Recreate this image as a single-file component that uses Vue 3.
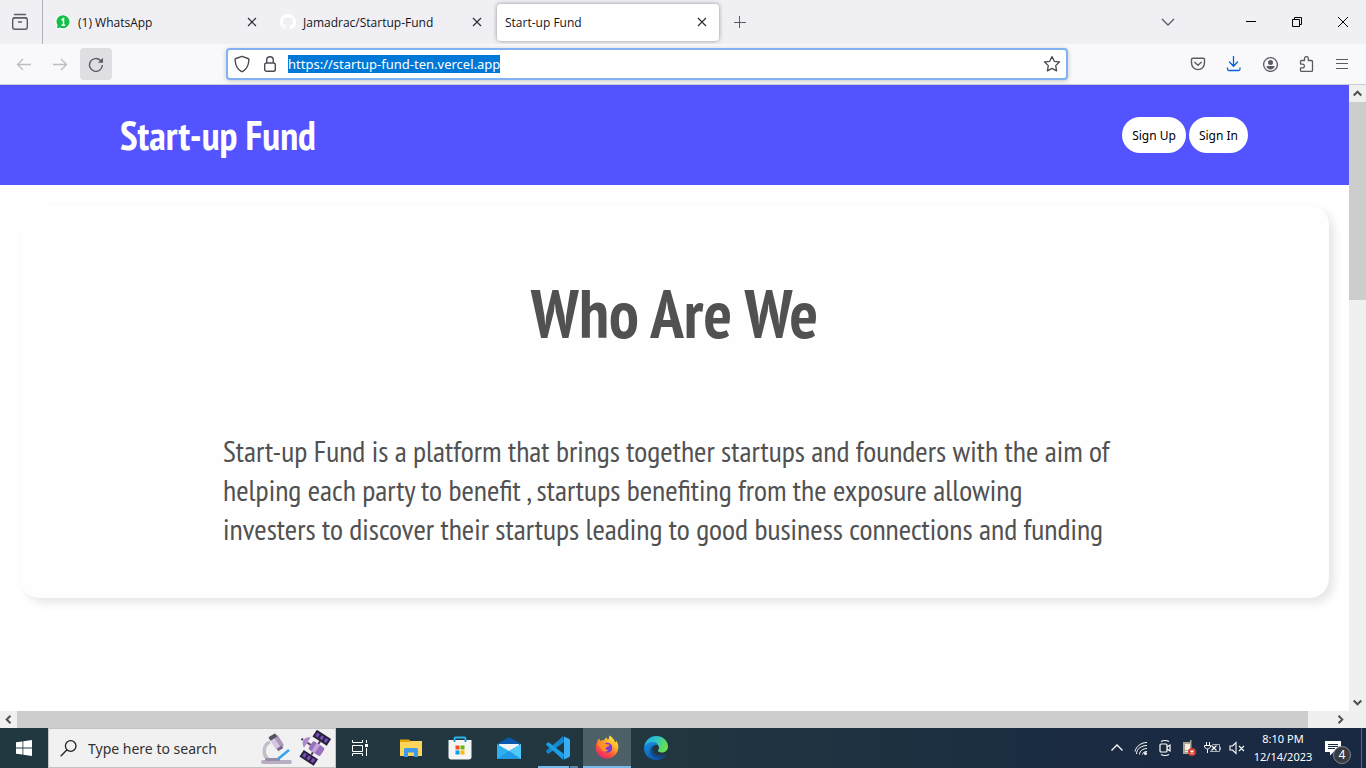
<script setup>
import { ref, onMounted } from 'vue'

const tabs = [
  { title: '(1) WhatsApp', icon: 'whatsapp', active: false },
  { title: 'Jamadrac/Startup-Fund', icon: 'github', active: false },
  { title: 'Start-up Fund', icon: '', active: true },
]
const address = ref('https://startup-fund-ten.vercel.app')
const addressBox = ref(null)

onMounted(() => {
  addressBox.value.focus()
  addressBox.value.select()
})
</script>

<template>
  <div class="screen">
    <header class="tabbar">
      <button class="recent" aria-label="Recent browsing">
        <svg width="18" height="18" viewBox="0 0 18 18" fill="none" stroke="#5b5b66" stroke-width="1.4" stroke-linecap="round">
          <path d="M3.500 1.500h11" /><rect x="1.700" y="4.700" width="14.600" height="11.600" rx="2.200" /><path d="M3 4.700h12M7.500 9h3" />
        </svg>
      </button>
      <nav class="tabs">
        <div v-for="tab in tabs" :key="tab.title" class="tab" :class="{ active: tab.active }">
          <svg v-if="tab.icon === 'whatsapp'" class="favicon" width="16" height="16" viewBox="0 0 16 16">
            <path d="M8 .5a7.500 7.500 0 1 1-3.700 14L.5 15.500l1-3.700A7.500 7.500 0 0 1 8 .5z" fill="#fff" />
            <path d="M8.200 1.300a6.500 6.500 0 1 1-3.300 12.200L1.800 14.300l.8-3A6.500 6.500 0 0 1 8.200 1.300z" fill="#12bf48" />
            <path d="M6.500 6l2-1.300v6.400M6.600 11.200h3.600" fill="none" stroke="#fff" stroke-width="1.500" />
          </svg>
          <svg v-if="tab.icon === 'github'" class="favicon" width="16" height="16" viewBox="0 0 16 16" fill="#fff">
            <path d="M8 0C3.580 0 0 3.580 0 8c0 3.540 2.290 6.530 5.470 7.590.4.070.55-.17.55-.38v-1.490c-2.010.37-2.530-.49-2.690-.94-.09-.23-.48-.94-.82-1.130-.28-.15-.68-.52-.01-.53.63-.01 1.080.58 1.230.82.72 1.210 1.870.87 2.330.66.07-.52.28-.87.51-1.070-1.780-.2-3.640-.89-3.640-3.950 0-.87.31-1.590.82-2.150-.08-.2-.36-1.020.08-2.120 0 0 .67-.21 2.200.82a7.600 7.600 0 0 1 4 0c1.530-1.040 2.200-.82 2.200-.82.44 1.100.16 1.920.08 2.120.51.56.82 1.270.82 2.150 0 3.070-1.870 3.750-3.650 3.950.29.25.54.73.54 1.480v2.200c0 .21.15.46.55.38A8 8 0 0 0 8 0z" />
          </svg>
          <span class="tab-title">{{ tab.title }}</span>
          <button class="close" :aria-label="'Close ' + tab.title">
            <svg width="10" height="10" viewBox="0 0 10 10" stroke="#2b2a33" stroke-width="1.100"><path d="M1 1l8 8M9 1l-8 8" /></svg>
          </button>
        </div>
      </nav>
      <button class="newtab" aria-label="New tab">
        <svg width="12" height="12" viewBox="0 0 12 12" stroke="#5b5b66"><path d="M5.500 0v12M0 6.500h12" /></svg>
      </button>
      <button class="listtabs" aria-label="List all tabs">
        <svg width="14" height="8" viewBox="0 0 14 8" fill="none" stroke="#5b5b66" stroke-width="1.300"><path d="M1 1l6 6 6-6" /></svg>
      </button>
      <div class="window-buttons">
        <button aria-label="Minimize"><svg width="10" height="10" viewBox="0 0 10 10" stroke="#000"><path d="M0 4.500h10" /></svg></button>
        <button aria-label="Restore"><svg width="10" height="10" viewBox="0 0 10 10" fill="none" stroke="#000" stroke-width="1"><path d="M.5 2.500h7v7h-7zM2.500 2.500v-2h7v7h-2" /></svg></button>
        <button aria-label="Close window"><svg width="10" height="10" viewBox="0 0 10 10" stroke="#000"><path d="M0 0l10 10M10 0L0 10" /></svg></button>
      </div>
    </header>

    <div class="toolbar">
      <button class="tool" aria-label="Back">
        <svg width="16" height="16" viewBox="0 0 16 16" fill="none" stroke="#bcbcc2" stroke-width="1.300"><path d="M15 8.500H1.500M7 3L1.500 8.500 7 14" /></svg>
      </button>
      <button class="tool" aria-label="Forward">
        <svg width="16" height="16" viewBox="0 0 16 16" fill="none" stroke="#bcbcc2" stroke-width="1.300"><path d="M1 8.500h13.500M9 3l5.500 5.500L9 14" /></svg>
      </button>
      <button class="tool pressed" aria-label="Reload">
        <svg width="16" height="16" viewBox="0 0 16 16" fill="none" stroke="#5b5b66" stroke-width="1.400"><path d="M14.300 9A6.400 6.400 0 1 1 12.500 4.500l1.500 1.500" /><path d="M15 1.700v5.100h-5.100z" fill="#5b5b66" stroke="none" /></svg>
      </button>
      <div class="address">
        <svg width="16" height="18" viewBox="0 0 16 18" fill="none" stroke="#4a4a52" stroke-width="1.400" stroke-linejoin="round"><path d="M8 1.300l6 2.200c.8.300 1 .8.900 1.500-.3 5-2.300 9.200-6.100 11.400-.5.300-1.100.3-1.600 0C3.400 14.200 1.400 10 1.100 5 1 4.300 1.200 3.800 2 3.500z" /></svg>
        <svg width="12" height="16" viewBox="0 0 12 16" fill="none" stroke="#4a4a52" stroke-width="1.400"><rect x=".7" y="7" width="10.600" height="8.300" rx="1.800" /><path d="M2.700 7V4a3.300 3.300 0 0 1 6.600 0v3" /></svg>
        <input ref="addressBox" v-model="address" type="text" aria-label="Address" spellcheck="false" />
        <button class="star" aria-label="Bookmark this page">
          <svg width="18" height="18" viewBox="0 0 18 18" fill="none" stroke="#4a4a52" stroke-width="1.300" stroke-linejoin="round"><path d="M9 1.600l2.300 4.700 5.200.7-3.800 3.600.9 5.300L9 13.400l-4.600 2.500.9-5.300L1.500 7l5.200-.7z" /></svg>
        </button>
      </div>
      <div class="tools-right">
        <button class="tool" aria-label="Save to Pocket">
          <svg width="16" height="16" viewBox="0 0 16 16" fill="none" stroke="#5b5b66" stroke-width="1.400" stroke-linecap="round"><path d="M2.800 2.200h10.400c.8 0 1.300.5 1.300 1.300v3.600a6.500 6.500 0 0 1-13 0V3.500c0-.8.500-1.300 1.300-1.300z" /><path d="M4.800 6.300L8 9.300l3.200-3" /></svg>
        </button>
        <button class="tool" aria-label="Downloads">
          <svg width="16" height="16" viewBox="0 0 16 16" fill="none" stroke="#0061e0" stroke-width="1.300" stroke-linecap="round"><path d="M7.500.5v9.500M3.500 6l4 4.300 4-4.300M1.500 12v1c0 .9.600 1.500 1.500 1.500h9.500c.9 0 1.500-.6 1.500-1.500v-1" /></svg>
        </button>
        <button class="tool" aria-label="Account">
          <svg width="16" height="16" viewBox="0 0 16 16"><circle cx="8.500" cy="8.500" r="6.900" fill="none" stroke="#5b5b66" stroke-width="1.300" /><circle cx="8.500" cy="6.500" r="2.500" fill="#5b5b66" /><path d="M4.400 10.100h8.200c-.4 2.200-2 3.500-4.100 3.500s-3.700-1.300-4.100-3.500z" fill="#5b5b66" /></svg>
        </button>
        <button class="tool" aria-label="Extensions">
          <svg width="16" height="16" viewBox="0 0 16 16" fill="none" stroke="#5b5b66" stroke-width="1.300" stroke-linejoin="round"><path d="M2.500 5.500c0-.6.400-1 1-1h3V2.500a1.900 1.900 0 0 1 3.800 0v2H13.500c.6 0 1 .4 1 1v9c0 .5-.4.900-1 .9h-10c-.6 0-1-.4-1-1v-2.500h2a1.900 1.900 0 0 0 0-3.800h-2z" /></svg>
        </button>
        <button class="tool" aria-label="Menu">
          <svg width="14" height="12" viewBox="0 0 14 12" stroke="#5b5b66" stroke-width="1.200"><path d="M1 1.500h12M1 5.500h12M1 10.500h12" /></svg>
        </button>
      </div>
    </div>

    <div class="viewport">
      <main class="page">
        <div class="banner">
          <h1>Start-up Fund</h1>
          <div class="actions">
            <button>Sign Up</button>
            <button>Sign In</button>
          </div>
        </div>
        <section class="card">
          <h2>Who Are We</h2>
          <p>
            Start-up Fund is a platform that brings together startups and founders with the aim of<br />
            helping each party to benefit , startups benefiting from the exposure allowing<br />
            investers to discover their startups leading to good business connections and funding
          </p>
        </section>
      </main>
      <div class="vscroll">
        <div class="arrow"><svg width="9" height="7" viewBox="0 0 9 7" fill="none" stroke="#505050" stroke-width="2"><path d="M.7 5.500l3.800-3.800 3.800 3.800" /></svg></div>
        <div class="vtrack"><div class="vthumb"></div></div>
        <div class="arrow"><svg width="9" height="7" viewBox="0 0 9 7" fill="none" stroke="#505050" stroke-width="2"><path d="M.7 1.500l3.800 3.800 3.800-3.800" /></svg></div>
      </div>
    </div>
    <div class="hscroll">
      <div class="arrow"><svg width="7" height="9" viewBox="0 0 7 9" fill="none" stroke="#505050" stroke-width="2"><path d="M5.500 .7L1.700 4.500l3.800 3.800" /></svg></div>
      <div class="htrack"><div class="hthumb"></div></div>
      <div class="arrow"><svg width="7" height="9" viewBox="0 0 7 9" fill="none" stroke="#505050" stroke-width="2"><path d="M1.500 .7l3.800 3.800-3.800 3.800" /></svg></div>
    </div>

    <footer class="taskbar">
      <button class="task" aria-label="Start">
        <svg width="16" height="16" viewBox="0 0 16 16" fill="#fff"><path d="M0 2.300l6.500-.9v6.200H0zM7.300 1.300L16 0v7.600H7.300zM0 8.400h6.500v6.200L0 13.700zM7.300 8.400H16V16l-8.700-1.300z" /></svg>
      </button>
      <label class="search">
        <svg width="17" height="17" viewBox="0 0 17 17" fill="none" stroke="#222" stroke-width="1.300"><circle cx="10.700" cy="6" r="5.300" /><path d="M7 9.800L.7 16.200" /></svg>
        <input type="text" aria-label="Search" placeholder="Type here to search" />
        <svg width="72" height="36" viewBox="0 0 72 36">
          <path d="M10 12c-7 3-8 13-1 18" fill="none" stroke="#c5bccb" stroke-width="3.500" />
          <rect x="1" y="30" width="31" height="4" rx="2" fill="#b9aec2" /><rect x="5" y="28" width="15" height="3" rx="1.500" fill="#988da5" />
          <path d="M18 29l11-9" stroke="#35a4ed" stroke-width="2.500" />
          <g transform="rotate(-32 16 12)"><rect x="12" y="6" width="9" height="13" rx="2" fill="#d4c7df" /><rect x="17" y="7" width="4" height="12" fill="#aa99b9" /><rect x="12" y="4" width="8" height="4" rx="1" fill="#57505f" /><rect x="13" y="18" width="6" height="3" fill="#76648e" /></g>
          <g transform="rotate(33 54 17)"><rect x="47" y="1" width="17" height="8" fill="#29213f" /><rect x="47" y="25" width="17" height="8" fill="#29213f" /><g fill="#7850b5"><rect x="49" y="3" width="3" height="4" /><rect x="54" y="3" width="3" height="4" /><rect x="59" y="3" width="3" height="4" /><rect x="49" y="27" width="3" height="4" /><rect x="54" y="27" width="3" height="4" /><rect x="59" y="27" width="3" height="4" /></g><path d="M56 9v16" stroke="#514167" stroke-width="2" /><rect x="50" y="12" width="14" height="10" rx="2" fill="#9871bd" /><rect x="54" y="12" width="4" height="10" fill="#c3a4dc" /><path d="M50 17h-4" stroke="#5a4579" stroke-width="2" /><path d="M46 11c-6 2-6 10 0 12z" fill="#ad8bcb" /><path d="M41 17h-2" stroke="#403153" stroke-width="2" /></g>
        </svg>
      </label>
      <button class="task view" aria-label="Task view">
        <svg width="16" height="16" viewBox="0 0 16 16" fill="none" stroke="#fff"><path d="M.5 0v2.500h10V0M.5 5.500h10v6H.5zM.5 16v-2.500h10V16M14.500 0v3M14.500 8v8" /><rect x="13" y="4" width="3" height="3" fill="#fff" stroke="none" /></svg>
      </button>
      <button class="task" aria-label="File Explorer">
        <svg width="22" height="20" viewBox="0 0 22 20"><path d="M0 1.500h9l2 2H22V18H0z" fill="#e5a50a" /><path d="M0 4h9l2-1h11v15H0z" fill="#ffd45a" /><path d="M4 19v-7.500c0-1 .7-1.500 1.500-1.500h11c.9 0 1.500.6 1.500 1.500V19h-4v-4.500H8V19z" fill="#3d9be9" /></svg>
      </button>
      <button class="task" aria-label="Microsoft Store">
        <svg width="24" height="24" viewBox="0 0 24 24"><path d="M6.500 6V2.500c0-.6.400-1 1-1h9c.6 0 1 .4 1 1V6" fill="none" stroke="#2cb4ee" stroke-width="1.800" /><path d="M.5 4h23v17c0 1.500-1 2.500-2.500 2.500H3C1.500 23.500.5 22.500.5 21z" fill="#f5f5f5" /><path d="M6.500 6V4M17.500 6V4" stroke="#168bd0" stroke-width="1.800" /><path d="M7.500 9.500h4v4h-4z" fill="#f25022" /><path d="M12.500 9.500h4v4h-4z" fill="#6fb20c" /><path d="M7.500 14.500h4v4h-4z" fill="#00a1ec" /><path d="M12.500 14.500h4v4h-4z" fill="#ffb900" /></svg>
      </button>
      <button class="task" aria-label="Mail">
        <svg width="24" height="22" viewBox="0 0 24 22"><path d="M0 7L12 0l12 7v5H0z" fill="#0b59ad" /><path d="M2 7h20v8H2z" fill="#f1f5f8" /><path d="M0 7l12 7 12-7v15H0z" fill="#2eaff0" /><path d="M12 14l12-7v15z" fill="#50cafa" /><path d="M0 22l12-8 12 8z" fill="#1689dc" opacity=".55" /></svg>
      </button>
      <button class="task code" aria-label="Visual Studio Code">
        <svg width="24" height="24" viewBox="0 0 24 24"><path d="M17 0l-4 4L3.500 11.500.3 14.800c-.4.400-.4.800 0 1.200l1.500 1.400c.4.300.8.300 1.200 0L18 6z" fill="#1488cf" /><path d="M17 24l-4-4L.3 9c-.4-.4-.4-.8 0-1.200l1.500-1.400c.4-.3.800-.3 1.200 0L18 18z" fill="#1b9ce5" /><path d="M17 0l6 2.700c.6.300 1 .8 1 1.500v15.600c0 .7-.4 1.200-1 1.500L17 24c1 0 1-1 1-1V1s0-1-1-1z" fill="#39adf4" /></svg>
      </button>
      <button class="task firefox" aria-label="Firefox">
        <svg width="24" height="24" viewBox="0 0 24 24">
          <defs><linearGradient id="fx" x1=".85" y1="0" x2=".2" y2="1"><stop offset="0" stop-color="#fff44f" /><stop offset=".35" stop-color="#ffb52b" /><stop offset=".65" stop-color="#ff5a35" /><stop offset="1" stop-color="#f21775" /></linearGradient></defs>
          <path d="M3 5c.5-.8 1-1.200 1.400-1.400L5 6c1.500-.8 3-.8 4-.4C9.500 4 10.500 3 12 2.500c-.2 1 .2 1.600 1 2.200C14.500 3 14.200 1.500 14.300.5c4 2 5 5 6 7 .8-.5.800-1.500.5-2.200C23 8 23.500 10.500 23.300 13 22.700 19 17.800 23.500 12 23.500 5.800 23.500.8 18.500.8 12.500.8 9.500 1.800 7 3 5z" fill="url(#fx)" />
          <circle cx="12.300" cy="12.800" r="5" fill="#7d3cd1" /><path d="M2.500 9c3-2.500 6-1.500 9 .2 2 0 3.500.3 3 1.300-.6 1-2.500.9-3.500 2.300-1 1.600.5 2.700 2.700 1.900-2 2.900-6.500 2.500-7.600-.7z" fill="#ff9327" />
        </svg>
      </button>
      <button class="task" aria-label="Microsoft Edge">
        <svg width="24" height="24" viewBox="0 0 24 24">
          <defs><linearGradient id="ea" x1="0" y1="0" x2="1" y2=".4"><stop offset="0" stop-color="#21a9eb" /><stop offset=".5" stop-color="#2ec5c9" /><stop offset="1" stop-color="#66df53" /></linearGradient><linearGradient id="eb" x1="0" y1="0" x2=".6" y2="1"><stop offset="0" stop-color="#1c91e3" /><stop offset="1" stop-color="#0c55a9" /></linearGradient></defs>
          <path d="M.2 11C1 4.500 6 0 12.200 0 19 0 24 5 24 10.500c0 3.500-2.500 6-6 6-2.600 0-4.300-1-4-2 .3-.6 1-1 1-2.700 0-2.500-2.500-4.500-6-4.500-4 0-7 2-8.800 3.700z" fill="url(#ea)" />
          <path d="M0 12.500C.4 8.500 4.500 6 8.500 6c3 0 5 1.300 5.800 3-5-1.200-7 3.300-5.500 6.700 1.800 4 7.400 5.800 12.900 3C19.500 22 16 24 12 24 5.500 24 0 19 0 12.500z" fill="url(#eb)" />
          <path d="M12 9c-3.800 1-4.600 4.500-3.200 6.900 2 3.600 7.500 5.200 12.700 2.700.6-.2.900.2.600.7-1.500 2.200-4.500 3-7.500 2.900-5-.2-9-3.700-8.300-8.300C6.700 11 9 9 12 9z" fill="#114a8b" />
        </svg>
      </button>
      <div class="tray">
        <button aria-label="Show hidden icons"><svg width="12" height="8" viewBox="0 0 12 8" fill="none" stroke="#fff" stroke-width="1.300"><path d="M.5 6.500L6 1l5.500 5.500" /></svg></button>
        <button aria-label="Network"><svg width="14" height="14" viewBox="0 0 14 14" fill="none" stroke="#fff" stroke-width="1"><path d="M1 10.500C2 5.500 7 1.500 13 1.500M2.500 13c0-5 5-8.500 10.500-8.500M5.500 13.500c0-3.500 3.500-6 7.500-6M8.500 13.500c0-1.700 2-3 4.500-3" /><circle cx="11.500" cy="12.500" r="1.500" fill="#fff" stroke="none" /></svg></button>
        <button aria-label="Meet now"><svg width="14" height="18" viewBox="0 0 14 18" fill="none" stroke="#fff" stroke-width="1.200"><rect x="2" y="5" width="7" height="8" rx="1" /><path d="M9 8l3-2v6l-3-2M3 2.500q4-2 8 0M3 15.500q4 2 8 0" /></svg></button>
        <button aria-label="Phone"><svg width="14" height="18" viewBox="0 0 14 18"><path d="M1 3h7V1h1.500v14H1z" fill="#aca58f" /><path d="M3 5h5v6H3z" fill="#f4efe2" /><path d="M3 12.500h5" stroke="#eee" /><circle cx="10" cy="13" r="4" fill="#d53c30" /><path d="M8.500 11.500l3 3M11.500 11.500l-3 3" stroke="#fff" stroke-width="1.200" /></svg></button>
        <button aria-label="Battery"><svg width="18" height="14" viewBox="0 0 18 14" fill="none" stroke="#fff"><path d="M2.500 1v3M5.500 1v3M.500 4.500h6v1.500l-2 2h-2l-2-2zM3.500 8.500V12" /><path d="M8.500 3.500h7v7H6M16.500 6v3" stroke="#a8b0ba" /><path d="M7.500 4.500l5 5M12.500 4.500l-5 5" stroke-width="1.200" /></svg></button>
        <button aria-label="Volume"><svg width="16" height="14" viewBox="0 0 16 14" fill="none" stroke="#fff" stroke-width="1.100"><path d="M1 5h2.500L7 1.500v11L3.500 9H1zM10 5l5 5M15 5l-5 5" /></svg></button>
      </div>
      <div class="clock"><span>8:10 PM</span><span>12/14/2023</span></div>
      <button class="notes" aria-label="Notifications">
        <svg width="16" height="16" viewBox="0 0 16 16"><path d="M0 1h16v11H8.500L5 15.500V12H0z" fill="#fff" /><path d="M3 4.500h10M3 6.500h10M3 8.500h7" stroke="#1a2942" /></svg>
        <span class="badge">4</span>
      </button>
      <button class="desktop" aria-label="Show desktop"></button>
    </footer>
  </div>
</template>

<style>
body { margin: 0; }
</style>

<style scoped>
* { box-sizing: border-box; }
.screen { min-height: 100vh; display: flex; flex-direction: column; background: #fff; font-family: "Noto Sans", "Open Sans", sans-serif; color: #15141a; }
button { border: 0; background: none; padding: 0; margin: 0; font: inherit; color: inherit; display: flex; align-items: center; justify-content: center; flex: none; }
input { border: 0; outline: 0; padding: 0; margin: 0; background: transparent; font: inherit; min-width: 0; }
svg { display: block; flex: none; }

.tabbar { height: 44px; display: flex; align-items: center; background: #f0eff4; }
.recent { width: 43px; height: 44px; border-right: 1px solid #b4b3b9; padding-right: 3px; }
.tabs { display: flex; gap: 3px; padding-left: 4px; }
.tab { width: 222px; height: 37px; display: flex; align-items: center; border-radius: 4px; padding: 0 12px 0 8px; font-family: "Open Sans", "Noto Sans", sans-serif; font-size: 12px; }
.tab.active { background: #fff; box-shadow: 0 0 4px rgba(0, 0, 0, .4); }
.favicon { margin-right: 7px; }
.tab-title { flex: 1; white-space: nowrap; }
.newtab { margin-left: 15px; }
.listtabs { margin-left: auto; margin-right: 53px; }
.window-buttons { display: flex; }
.window-buttons button { width: 46px; height: 44px; }

.toolbar { height: 41px; display: flex; align-items: center; gap: 4px; padding: 0 8px; background: #f9f9fb; border-bottom: 1px solid #ccccd2; }
.tool { width: 32px; height: 32px; border-radius: 4px; }
.tool.pressed { background: #dedee3; }
.address { flex: 1; margin: 0 110px; height: 32px; display: flex; align-items: center; border: 2px solid #80b2f3; border-radius: 4px; background: #fff; padding: 0 5px 0 6px; box-shadow: 0 1px 5px rgba(0, 0, 0, .2); }
.address svg + svg { margin-left: 14px; }
.address input { flex: 1; margin-left: 12px; font-size: 13px; line-height: 18px; caret-color: transparent; }
.address input::selection { background: #0078d7; color: #fff; }
.tools-right { display: flex; gap: 4px; }

.viewport { flex: 1; display: flex; }
.page { flex: 1; min-width: 0; background: #fff; }
.banner { height: 100px; padding: 0 101px 0 120px; display: flex; align-items: center; justify-content: space-between; background: #5353ff; }
h1, h2, .card p { font-family: "PT Sans Narrow", "Liberation Sans Narrow", "Open Sans", sans-serif; margin: 0; }
h1 { color: #fff; font-size: 40px; line-height: 48px; white-space: nowrap; }
.actions { display: flex; gap: 3px; }
.actions button { height: 36px; padding: 0 10px; border-radius: 18px; background: #fff; color: #000; font-size: 12px; }
.card { margin: 20px; min-height: 393px; border-radius: 20px; background: #fefefe; box-shadow: 5px 5px 10px rgba(0, 0, 0, .1); padding: 68px 0 48px; }
h2 { text-align: center; font-size: 67px; line-height: 80px; color: #515151; }
.card p { margin: 78px 0 0 203px; font-size: 30px; line-height: 39px; color: #515151; white-space: nowrap; }

.vscroll { width: 17px; display: flex; flex-direction: column; background: #f0f0f0; }
.arrow { width: 17px; height: 17px; display: flex; align-items: center; justify-content: center; flex: none; }
.vtrack { flex: 1; }
.vthumb { height: 198px; background: #cdcdcd; }
.hscroll { height: 17px; display: flex; background: #f0f0f0; padding-right: 17px; }
.htrack { flex: 1; padding-right: 24px; }
.hthumb { height: 17px; background: #cdcdcd; }

.taskbar { height: 40px; display: flex; align-items: center; gap: 1px; background: linear-gradient(90deg, #223840 0%, #21363f 50%, #1a2b42 80%, #1a2942 100%); color: #fff; }
.task { width: 48px; height: 40px; }
.search { width: 288px; height: 40px; display: flex; align-items: center; background: #f1f1f1; border: 1px solid #c4c4c4; padding: 0 3px 0 11px; margin: 0 -1px; }
.search input { flex: 1; margin-left: 11px; font-size: 14px; }
.search input::placeholder { color: #333; opacity: 1; }
.view { margin-right: 2px; }
.code { background: linear-gradient(90deg, transparent 4px, #76b9ed 4px 35px, transparent 35px 36px, #5686ae 36px 44px, transparent 44px) bottom / 100% 2px no-repeat; }
.firefox { background: #4d5f67; border-bottom: 2px solid #76b9ed; }
.tray { margin-left: auto; display: flex; }
.tray button { width: 24px; height: 40px; }
.clock { width: 66px; display: flex; flex-direction: column; align-items: center; font-size: 11px; line-height: 18px; }
.notes { width: 30px; height: 40px; margin-left: 1px; position: relative; }
.badge { position: absolute; left: 15px; top: 18px; width: 18px; height: 18px; border-radius: 9px; background: #383b41; border: 1px solid #83878d; font-size: 12px; line-height: 16px; text-align: center; }
.desktop { width: 5px; height: 40px; margin-left: 12px; border-left: 1px solid #5d6878; }
</style>
